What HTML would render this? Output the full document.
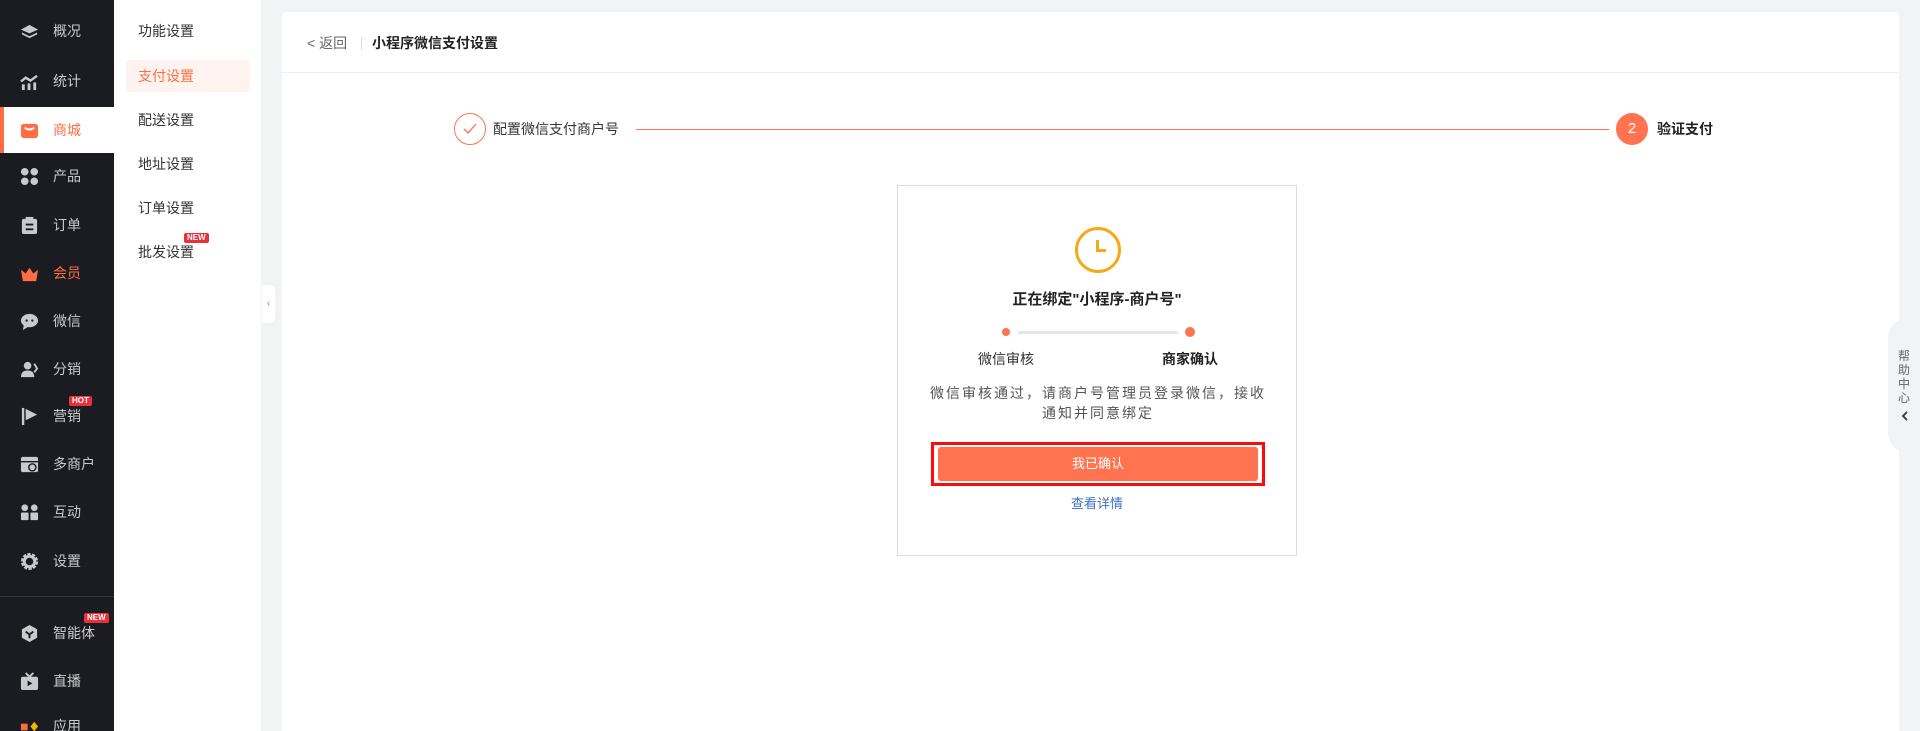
<!DOCTYPE html>
<html style="width:1920px;height:731px;overflow:hidden"><head><meta charset="utf-8"><style>
*{margin:0;padding:0;box-sizing:border-box}
body{width:1920px;height:731px;overflow:hidden;background:#f2f3f5;font-family:"Liberation Sans","Noto Sans CJK SC",sans-serif;position:relative;color:#333}
.side{position:absolute;left:0;top:0;width:114px;height:731px;background:#1b1c21;overflow:hidden}
.it{position:absolute;left:0;width:114px;height:40px;display:flex;align-items:center;font-size:14px;color:#c9cacd}
.it .ic{position:absolute;left:20px;width:19px;height:19px}
.it span{position:absolute;left:53px}
.act{background:#fff;color:#ff6d45;border-left:4px solid #ff6d45;height:46px}
.badge{position:absolute;background:#e8313a;color:#fff;font-size:8px;font-weight:bold;line-height:10px;padding:0 3px;border-radius:2px;font-family:"Liberation Sans",sans-serif}
.sub{position:absolute;left:114px;top:0;width:147px;height:731px;background:#fff}
.si{position:absolute;left:24px;font-size:14px;color:#333;line-height:20px}
.card{position:absolute;left:282px;top:12px;width:1617px;height:719px;background:#fff;border-radius:4px 4px 0 0}
.abs{position:absolute}
</style></head><body>
<div class="side">
 <div class="it" style="top:11px"><svg class="ic" viewBox="0 0 20 20"><path d="M10 3L19 8 10 12 1 8Z M2 11l8 4 8-4v2l-8 4-8-4z" fill="#c9cacd"/></svg><span>概况</span></div>
 <div class="it" style="top:61px"><svg class="ic" viewBox="0 0 20 20"><path d="M1 10l5-4 5 3 7-5" stroke="#c9cacd" stroke-width="2.5" fill="none"/><rect x="2" y="13" width="3" height="6" fill="#c9cacd"/><rect x="8" y="12" width="3" height="7" fill="#c9cacd"/><rect x="14" y="11" width="3" height="8" fill="#c9cacd"/></svg><span>统计</span></div>
 <div class="it act" style="top:107px"><svg class="ic" style="left:16px" viewBox="0 0 20 20"><rect x="1" y="3" width="18" height="15" rx="3" fill="#ff6d45"/><path d="M5 7q5 4 10 0" stroke="#fff" stroke-width="2" fill="none"/></svg><span style="left:49px">商城</span></div>
 <div class="it" style="top:156px"><svg class="ic" viewBox="0 0 20 20" fill="#c9cacd"><circle cx="5" cy="5" r="4"/><circle cx="15" cy="5" r="4"/><circle cx="5" cy="15" r="4"/><circle cx="15" cy="15" r="4"/></svg><span>产品</span></div>
 <div class="it" style="top:205px"><svg class="ic" viewBox="0 0 20 20"><rect x="2" y="3" width="16" height="16" rx="2" fill="#c9cacd"/><rect x="6" y="1" width="8" height="4" fill="#c9cacd"/><path d="M6 9h8M6 14h8" stroke="#1b1c21" stroke-width="2"/></svg><span>订单</span></div>
 <div class="it" style="top:253px;color:#ff6d45"><svg class="ic" viewBox="0 0 20 20"><path d="M1 6l5 4 4-6 4 6 5-4-2 12H3z" fill="#ff6d45"/></svg><span>会员</span></div>
 <div class="it" style="top:301px"><svg class="ic" viewBox="0 0 20 20"><ellipse cx="10" cy="9" rx="9" ry="7" fill="#c9cacd"/><path d="M4 14l-1 5 5-3z" fill="#c9cacd"/><circle cx="7" cy="9" r="1.2" fill="#1b1c21"/><circle cx="13" cy="9" r="1.2" fill="#1b1c21"/></svg><span>微信</span></div>
 <div class="it" style="top:349px"><svg class="ic" viewBox="0 0 20 20" fill="#c9cacd"><circle cx="8" cy="6" r="4"/><path d="M1 18q0-7 7-7 7 0 7 7z"/><path d="M15 4l3 5-3 4" stroke="#c9cacd" stroke-width="2" fill="none"/></svg><span>分销</span></div>
 <div class="it" style="top:396px"><svg class="ic" viewBox="0 0 20 20" fill="#c9cacd"><rect x="2" y="1" width="2.5" height="18"/><path d="M6 2l12 6-12 6z"/></svg><span>营销</span></div>
 <div class="badge" style="left:69px;top:396px">HOT</div>
 <div class="it" style="top:444px"><svg class="ic" viewBox="0 0 20 20"><rect x="1" y="2" width="18" height="16" rx="2" fill="#c9cacd"/><circle cx="13" cy="13" r="4.5" fill="#1b1c21"/><circle cx="13" cy="13" r="3" fill="#c9cacd"/><path d="M1 7h18" stroke="#1b1c21" stroke-width="1.5"/></svg><span>多商户</span></div>
 <div class="it" style="top:492px"><svg class="ic" viewBox="0 0 20 20" fill="#c9cacd"><circle cx="5" cy="5" r="3.5"/><circle cx="15" cy="5" r="3.5"/><rect x="1" y="10" width="8" height="8" rx="1"/><rect x="11" y="10" width="8" height="8" rx="1"/></svg><span>互动</span></div>
 <div class="it" style="top:541px"><svg class="ic" viewBox="0 0 20 20"><circle cx="10" cy="10" r="7" fill="none" stroke="#c9cacd" stroke-width="4" stroke-dasharray="3 1.4"/><circle cx="10" cy="10" r="5.5" fill="none" stroke="#c9cacd" stroke-width="3"/></svg><span>设置</span></div>
 <div style="position:absolute;left:0;top:596px;width:114px;height:1px;background:#34353b"></div>
 <div class="it" style="top:613px"><svg class="ic" viewBox="0 0 20 20"><path d="M10 1l8 4.5v9L10 19l-8-4.5v-9z" fill="#c9cacd"/><path d="M6 8l4 3 4-3M10 11v4" stroke="#1b1c21" stroke-width="2" fill="none"/></svg><span>智能体</span></div>
 <div class="badge" style="left:84px;top:613px">NEW</div>
 <div class="it" style="top:661px"><svg class="ic" viewBox="0 0 20 20"><rect x="1" y="5" width="18" height="14" rx="2" fill="#c9cacd"/><path d="M6 1l4 4 4-4" stroke="#c9cacd" stroke-width="2" fill="none"/><path d="M8 9l5 3-5 3z" fill="#1b1c21"/></svg><span>直播</span></div>
 <div class="it" style="top:706px"><svg class="ic" viewBox="0 0 20 20"><rect x="1" y="7" width="7" height="7" fill="#ff6d45"/><path d="M15 5l4 5-4 5-4-5z" fill="#f5b400"/></svg><span>应用</span></div>
</div>
<div class="sub">
 <div class="si" style="top:21px">功能设置</div>
 <div class="abs" style="left:12px;top:60px;width:124px;height:32px;background:#fff3ef;border-radius:4px"></div>
 <div class="si" style="top:66px;color:#ff6d45">支付设置</div>
 <div class="si" style="top:110px">配送设置</div>
 <div class="si" style="top:154px">地址设置</div>
 <div class="si" style="top:198px">订单设置</div>
 <div class="si" style="top:242px">批发设置</div>
 <div class="badge" style="left:70px;top:233px">NEW</div>
</div>
<div class="abs" style="left:262px;top:285px;width:13px;height:38px;background:#fff;border-radius:0 6px 6px 0;font-size:10px;color:#888;text-align:center;line-height:38px">&lsaquo;</div>
<div class="card">
 <div class="abs" style="left:25px;top:20px;font-size:14px;color:#666;line-height:22px">&lt; 返回</div>
 <div class="abs" style="left:79px;top:25px;width:1px;height:13px;background:#ddd"></div>
 <div class="abs" style="left:90px;top:20px;font-size:14px;font-weight:bold;color:#222;line-height:22px">小程序微信支付设置</div>
 <div class="abs" style="left:0;top:60px;width:1617px;height:1px;background:#eee"></div>
 <div class="abs" style="left:172px;top:101px;width:32px;height:32px;border:1px solid #ff7350;border-radius:50%"></div>
 <svg class="abs" style="left:180px;top:110px" width="16" height="14" viewBox="0 0 16 14"><path d="M2 7l4 4 8-9" stroke="#ff7350" stroke-width="1.3" fill="none"/></svg>
 <div class="abs" style="left:211px;top:106px;font-size:14px;color:#333;line-height:22px">配置微信支付商户号</div>
 <div class="abs" style="left:354px;top:117px;width:973px;height:1px;background:#ff7350"></div>
 <div class="abs" style="left:1334px;top:101px;width:32px;height:32px;background:#ff7350;border-radius:50%;color:#fff;font-size:15px;text-align:center;line-height:32px">2</div>
 <div class="abs" style="left:1375px;top:106px;font-size:14px;font-weight:bold;color:#222;line-height:22px">验证支付</div>
 <div class="abs" style="left:615px;top:173px;width:400px;height:371px;border:1px solid #ddd">
  <div class="abs" style="left:177px;top:41px;width:46px;height:46px;border:3px solid #f7a816;border-radius:50%"></div>
  <div class="abs" style="left:198px;top:54px;width:3px;height:12px;background:#f7a816"></div>
  <div class="abs" style="left:198px;top:63px;width:10px;height:3px;background:#f7a816"></div>
  <div class="abs" style="left:0;top:103px;width:398px;text-align:center;font-size:15px;font-weight:bold;color:#222;line-height:22px">正在绑定"小程序-商户号"</div>
  <div class="abs" style="left:104px;top:142px;width:8px;height:8px;border-radius:50%;background:#ff7350"></div>
  <div class="abs" style="left:120px;top:145px;width:160px;height:3px;border-radius:2px;background:#e5e5e5"></div>
  <div class="abs" style="left:287px;top:141px;width:10px;height:10px;border-radius:50%;background:#ff7350"></div>
  <div class="abs" style="left:58px;top:162px;width:100px;text-align:center;font-size:14px;color:#333;line-height:22px">微信审核</div>
  <div class="abs" style="left:242px;top:162px;width:100px;text-align:center;font-size:14px;font-weight:bold;color:#222;line-height:22px">商家确认</div>
  <div class="abs" style="left:27px;top:197px;width:346px;text-align:center;font-size:14px;letter-spacing:2px;color:#555;line-height:20px">微信审核通过，请商户号管理员登录微信，接收通知并同意绑定</div>
  <div class="abs" style="left:33px;top:256px;width:334px;height:44px;border:3px solid #ff0a0a"></div>
  <div class="abs" style="left:40px;top:261px;width:320px;height:34px;background:#ff7350;border-radius:3px;color:#fff;font-size:13px;text-align:center;line-height:34px">我已确认</div>
  <div class="abs" style="left:0;top:308px;width:398px;text-align:center;font-size:13px;color:#3c6fc6;line-height:20px">查看详情</div>
 </div>
</div>
<div class="abs" style="left:1900px;top:0;width:20px;height:731px;background:#f2f3f5"></div>
<div class="abs" style="left:1888px;top:318px;width:32px;height:135px;background:#f2f3f5;border-radius:20px 0 0 20px"></div>
<div class="abs" style="left:1897px;top:349px;width:14px;font-size:12px;color:#666;line-height:14px;text-align:center">帮<br>助<br>中<br>心</div>
<svg class="abs" style="left:1900px;top:410px" width="10" height="12" viewBox="0 0 10 12"><path d="M7 2L3 6l4 4" stroke="#444" stroke-width="2" fill="none"/></svg>
</body></html>
